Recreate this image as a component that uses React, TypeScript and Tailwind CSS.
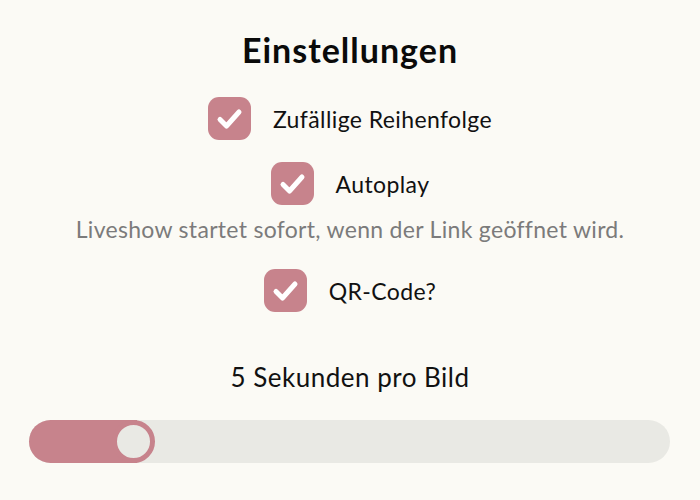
import React from "react";

function Check() {
  return (
    <div className="w-[43px] h-[43px] rounded-[11px] bg-[#c7838c] flex items-center justify-center shrink-0">
      <svg width="43" height="43" viewBox="0 0 43 43">
        <path d="M12 22.5 L18.5 29 L31 15" fill="none" stroke="#ffffff" strokeWidth="5" strokeLinecap="round" strokeLinejoin="round" />
      </svg>
    </div>
  );
}

function Row({ label }: { label: string }) {
  return (
    <div className="flex items-center gap-[22px]">
      <Check />
      <span className="text-[23px] leading-[30px] tracking-[0.4px] text-[#111]">{label}</span>
    </div>
  );
}

export default function App() {
  return (
    <div
      className="w-[700px] h-[500px] bg-[#fbfaf5] flex flex-col items-center overflow-hidden"
      style={{ fontFamily: '"Source Sans Pro", Lato, "Noto Sans", sans-serif' }}
    >
      <h1 className="mt-[30px] text-[34px] leading-[40px] tracking-[1px] font-bold text-[#0a0a0a]">Einstellungen</h1>
      <div className="mt-[27px]">
        <Row label="Zufällige Reihenfolge" />
      </div>
      <div className="mt-[22px]">
        <Row label="Autoplay" />
      </div>
      <p className="mt-[9px] text-[23px] leading-[30px] tracking-[0.3px] text-[#7b7b7b]">
        Liveshow startet sofort, wenn der Link geöffnet wird.
      </p>
      <div className="mt-[25px]">
        <Row label="QR-Code?" />
      </div>
      <div className="mt-[50px] text-[26px] leading-[30px] tracking-[0.5px] text-[#111]">5 Sekunden pro Bild</div>
      <div className="mt-[28px] self-stretch ml-[29px] mr-[30px] h-[43px] rounded-full bg-[#e9e9e4] relative flex">
        <div className="w-[108px] h-full rounded-l-full bg-[#c7838c]" />
        <div className="absolute left-[83px] top-0 w-[43px] h-[43px] rounded-full bg-[#e9e9e4] border-[5px] border-[#c7838c]" />
      </div>
    </div>
  );
}
